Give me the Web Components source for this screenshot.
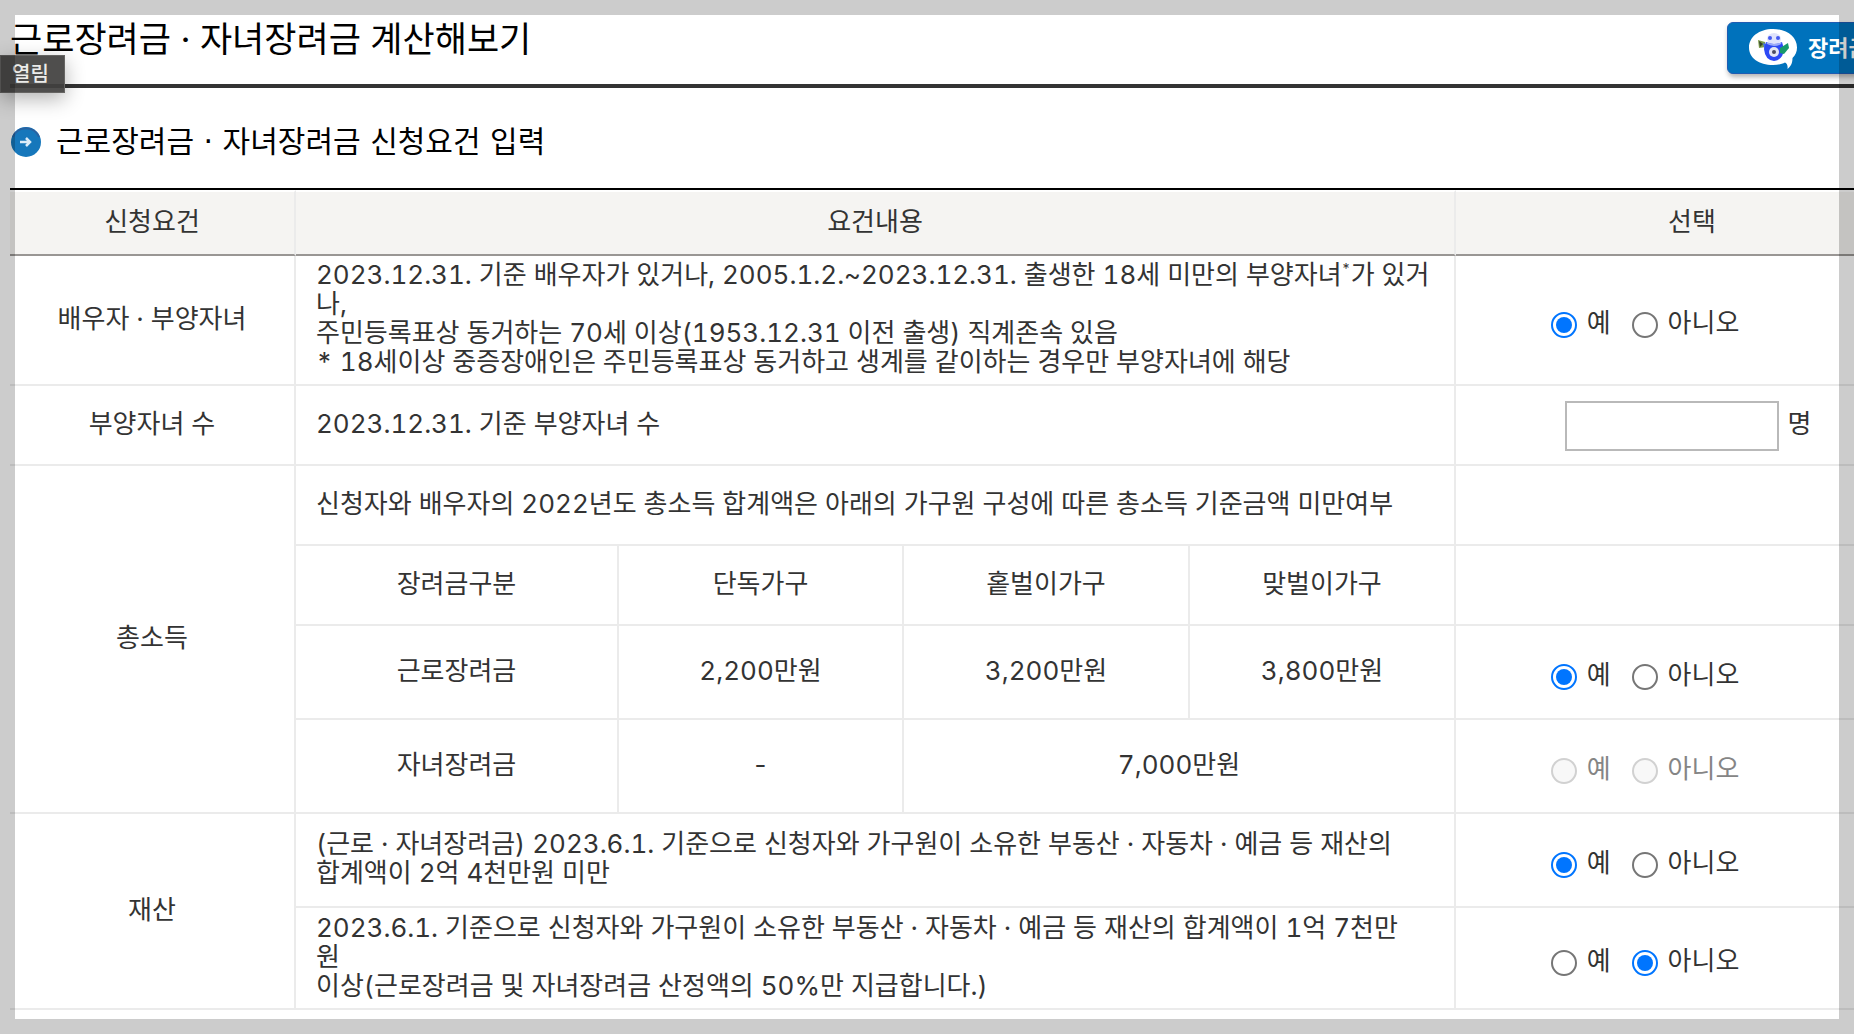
<!DOCTYPE html>
<html lang="ko">
<head>
<meta charset="utf-8">
<title>근로장려금 · 자녀장려금 계산해보기</title>
<style>
  body {
    margin: 0;
    height: 100vh;
    overflow: hidden;
    background: #fff;
    color: #333;
    font-family: Inter, "Noto Sans CJK KR", sans-serif;
    font-size: 26px;
    font-kerning: none;
    font-variant-numeric: tabular-nums;
    line-height: 29px;
  }
</style>
</head>
<body>
<page-frame>
  <state-tip slot="tip">열림</state-tip>
  <calc-header>
    근로장려금 · 자녀장려금 계산해보기
    <chat-button slot="action">장려금</chat-button>
  </calc-header>
  <section-heading>근로장려금 · 자녀장려금 신청요건 입력</section-heading>
  <requirement-table></requirement-table>
</page-frame>

<script>
const define = (name, html) => {
  const template = document.createElement('template');
  template.innerHTML = html;
  window.customElements.define(name, class extends HTMLElement {
    constructor() {
      super();
      this.attachShadow({ mode: 'open' });
      this.shadowRoot.appendChild(template.content.cloneNode(true));
    }
  });
};

define('page-frame', `
  <style>
    :host { display: block; position: relative; height: 100%; overflow: hidden; }
    /* content is wider than the window, it runs off to the right */
    main { width: calc(100% + 66px); padding: 14px 0 0 10px; }
    .shade {
      position: absolute;
      inset: 0;
      border: 15px solid rgba(0, 0, 0, .2);
      pointer-events: none;
    }
    ::slotted([slot="tip"]) { position: absolute; left: 0; top: 55px; }
  </style>
  <main><slot></slot></main>
  <slot name="tip"></slot>
  <div class="shade"></div>
`);

define('state-tip', `
  <style>
    :host {
      display: block;
      box-sizing: border-box;
      padding: 4px 15px 3px 11px;
      border: 1px solid #666563;
      background: rgba(66, 65, 63, .93);
      box-shadow: 0 6px 20px rgba(0, 0, 0, .3);
      color: #ececea;
      font-size: 20px;
      font-weight: 500;
    }
  </style>
  <slot></slot>
`);

define('calc-header', `
  <style>
    :host {
      display: flex;
      justify-content: space-between;
      align-items: flex-start;
      height: 70px;
      border-bottom: 4px solid #333;
    }
    h1 { margin: 0; color: #000; font-size: 35px; font-weight: 400; line-height: 50px; }
    .action { padding-top: 8px; }
  </style>
  <h1><slot></slot></h1>
  <div class="action"><slot name="action"></slot></div>
`);

define('chat-button', `
  <style>
    :host { display: block; }
    button {
      display: flex;
      align-items: center;
      gap: 10px;
      width: 203px;
      height: 52px;
      padding: 0 20px;
      border: 1px solid #1f5cb3;
      border-radius: 6px;
      background: #0072bc;
      box-shadow: 1px 3px 5px rgba(0, 0, 0, .3);
      color: #fff;
      font: inherit;
      font-size: 22px;
      font-weight: 700;
      white-space: nowrap;
    }
    svg { flex: none; }
  </style>
  <button type="button">
    <svg width="50" height="42" viewBox="0 0 50 42" aria-hidden="true">
      <path d="M25 2C11 2 1 10 1 20.500S11 38 25 38c5 0 9-1 12-2.500 2 1 3 3 2.500 6.500 4-3 5-7 5-11 3-3 4.500-6 4.500-10.500C49 10 39 2 25 2z" fill="#fff"/>
      <path d="M10 13l7 2 1 5-7 1z" fill="#7d9c4b"/>
      <path d="M11 14l4 3-3 3z" fill="#33402a"/>
      <path d="M15 16l7 3-5 5z" fill="#3d6df0"/>
      <ellipse cx="26" cy="12" rx="7" ry="6" fill="#dfe2fb"/>
      <circle cx="22" cy="11" r="2" fill="#4358ef"/>
      <circle cx="30" cy="11" r="2" fill="#4358ef"/>
      <path d="M18 15q8 4 16 0l2 7q-1 11-10 12-9-1-10-12z" fill="#2d49f5"/>
      <path d="M19 16q7 4 14 0" fill="none" stroke="#9caaf8" stroke-width="2"/>
      <circle cx="26" cy="25" r="5" fill="#e4e6f4"/>
      <circle cx="26" cy="25" r="2" fill="#4d4d63"/>
      <path d="M32 21l8-5 1 5-5 6-4-1z" fill="#16996b"/>
    </svg>
    <slot></slot>
  </button>
`);

define('section-heading', `
  <style>
    :host { display: flex; align-items: center; gap: 14px; height: 92px; padding-top: 8px; }
    h2 {
      margin: 0;
      color: #000;
      font-family: "DejaVu Sans", "Noto Sans CJK KR", sans-serif;
      font-size: 30px;
      font-weight: 400;
      line-height: 40px;
    }
  </style>
  <svg width="32" height="32" viewBox="0 0 32 32" aria-hidden="true">
    <circle cx="16" cy="16" r="15" fill="#1677bb"/>
    <path d="M3 11A14 14 0 0 1 29 11" fill="none" stroke="#2a62a0" stroke-width="2"/>
    <path d="M10 16h10M16 12l4 4-4 4" fill="none" stroke="#dcecf8" stroke-width="2.500"/>
  </svg>
  <h2><slot></slot></h2>
`);

// 예 / 아니오 pair, value="yes|no" ticks one, disabled greys both
class YesNo extends HTMLElement {
  constructor() {
    super();
    this.attachShadow({ mode: 'open' });
  }

  connectedCallback() {
    const value = this.getAttribute('value');
    const off = this.hasAttribute('disabled') ? 'disabled' : '';
    this.shadowRoot.innerHTML = `
      <style>
        :host { display: flex; justify-content: center; gap: 21px; padding: 8px 94px 0 0; }
        :host([disabled]) { color: #858585; }
        label { display: flex; align-items: center; gap: 10px; }
        input {
          appearance: none;
          box-sizing: border-box;
          width: 26px;
          height: 26px;
          margin: 6px 0 0;
          border: 2px solid #767676;
          border-radius: 50%;
          background: #fff;
        }
        input:checked {
          padding: 3px;
          border-color: #0075ff;
          background: #0075ff content-box;
        }
        input:disabled { border-color: #d1d1d1; background: #f8f8f8; }
      </style>
      <label><input type="radio" name="answer" ${value === 'yes' ? 'checked' : ''} ${off}>예</label>
      <label><input type="radio" name="answer" ${value === 'no' ? 'checked' : ''} ${off}>아니오</label>
    `;
  }
}
window.customElements.define('yes-no', YesNo);

define('people-count', `
  <style>
    :host { display: flex; justify-content: center; align-items: center; gap: 9px; padding-right: 8px; }
    input {
      box-sizing: border-box;
      width: 214px;
      height: 50px;
      margin: 6px 0 0;
      border: 2px solid #b9b9b9;
      font: inherit;
    }
  </style>
  <input type="text" id="count" inputmode="numeric">
  <label for="count">명</label>
`);

define('requirement-table', `
  <style>
    :host { display: block; }
    table {
      width: 100%;
      table-layout: fixed;
      border-top: 2px solid #000;
      border-spacing: 0;
    }
    .name { width: 286px; }
    .kind { width: 323px; }
    .single { width: 285px; }
    .sole { width: 286px; }
    .choice { width: 474px; }
    th, td {
      box-sizing: border-box;
      padding: 0 0 4px;
      border-right: 2px solid #ebebeb;
      border-bottom: 2px solid #ebebeb;
      font-weight: 400;
      text-align: center;
      white-space: nowrap;
    }
    thead th {
      height: 66px;
      border-top: 2px solid #fff;
      border-bottom-color: #999694;
      background: #f5f4f2;
    }
    .text { padding-left: 20px; text-align: left; }
    .low { height: 80px; }
    .mid { height: 94px; }
    .high { height: 102px; }
    .top { height: 130px; }
    sup { font-size: 14px; line-height: 0; }
  </style>
  <table>
    <colgroup>
      <col class="name"><col class="kind"><col class="single"><col class="sole"><col><col class="choice">
    </colgroup>
    <thead>
      <tr><th>신청요건</th><th colspan="4">요건내용</th><th>선택</th></tr>
    </thead>
    <tbody>
      <tr>
        <th class="top">배우자 · 부양자녀</th>
        <td class="text" colspan="4">2023.12.31. 기준 배우자가 있거나, 2005.1.2.~2023.12.31. 출생한 18세 미만의 부양자녀<sup>*</sup>가 있거<br>나,<br>주민등록표상 동거하는 70세 이상(1953.12.31 이전 출생) 직계존속 있음<br>* 18세이상 중증장애인은 주민등록표상 동거하고 생계를 같이하는 경우만 부양자녀에 해당</td>
        <td><yes-no value="yes"></yes-no></td>
      </tr>
      <tr>
        <th class="low">부양자녀 수</th>
        <td class="text" colspan="4">2023.12.31. 기준 부양자녀 수</td>
        <td><people-count></people-count></td>
      </tr>
      <tr>
        <th rowspan="4">총소득</th>
        <td class="text low" colspan="4">신청자와 배우자의 2022년도 총소득 합계액은 아래의 가구원 구성에 따른 총소득 기준금액 미만여부</td>
        <td></td>
      </tr>
      <tr>
        <th class="low">장려금구분</th><th>단독가구</th><th>홑벌이가구</th><th>맞벌이가구</th>
        <td></td>
      </tr>
      <tr>
        <th class="mid">근로장려금</th><td>2,200만원</td><td>3,200만원</td><td>3,800만원</td>
        <td><yes-no value="yes"></yes-no></td>
      </tr>
      <tr>
        <th class="mid">자녀장려금</th><td>-</td><td colspan="2">7,000만원</td>
        <td><yes-no disabled></yes-no></td>
      </tr>
      <tr>
        <th rowspan="2">재산</th>
        <td class="text mid" colspan="4">(근로 · 자녀장려금) 2023.6.1. 기준으로 신청자와 가구원이 소유한 부동산 · 자동차 · 예금 등 재산의<br>합계액이 2억 4천만원 미만</td>
        <td><yes-no value="yes"></yes-no></td>
      </tr>
      <tr>
        <td class="text high" colspan="4">2023.6.1. 기준으로 신청자와 가구원이 소유한 부동산 · 자동차 · 예금 등 재산의 합계액이 1억 7천만<br>원<br>이상(근로장려금 및 자녀장려금 산정액의 50%만 지급합니다.)</td>
        <td><yes-no value="no"></yes-no></td>
      </tr>
    </tbody>
  </table>
`);
</script>
</body>
</html>
